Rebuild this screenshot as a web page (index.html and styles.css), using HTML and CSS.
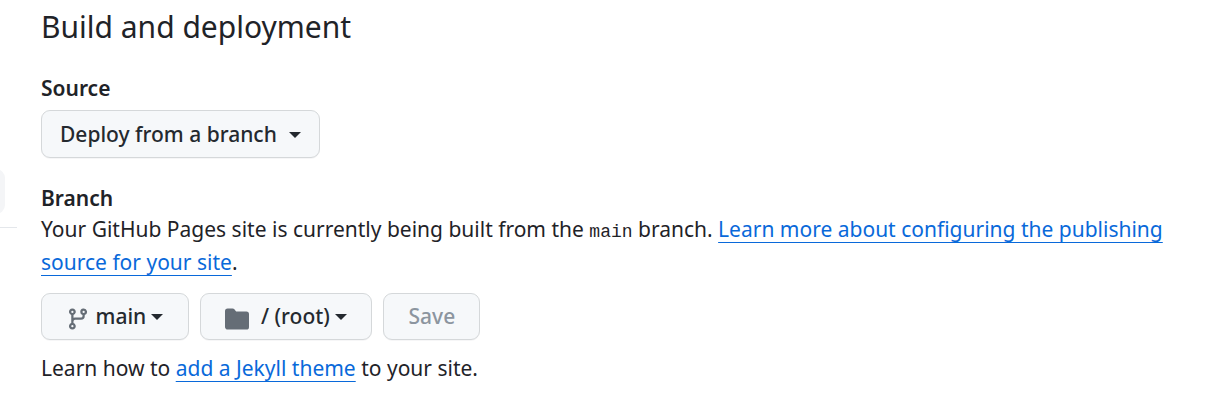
FILE: index.html
```html
<!DOCTYPE html>
<html lang="en">
<head>
<meta charset="utf-8">
<title>Pages settings</title>
<link rel="stylesheet" href="styles.css">
</head>
<body>
<div class="page">
  <aside class="sidebar"><div class="nav-item"></div><div class="divider"></div></aside>
  <main class="content">
    <h2 class="title">Build and deployment</h2>
    <h4 class="label">Source</h4>
    <button class="btn source-btn">Deploy from a branch<span class="caret"></span></button>
    <h4 class="label branch-label">Branch</h4>
    <p class="text">Your GitHub Pages site is currently being built from the <code class="code">main</code> branch. <a class="link" href="#">Learn more about configuring the publishing source for your site</a>.</p>
    <div class="controls">
      <button class="btn main-btn"><svg class="icon" viewBox="0 0 16 16"><path d="M9.5 3.25a2.25 2.25 0 1 1 3 2.122V6A2.5 2.5 0 0 1 10 8.5H6a1 1 0 0 0-1 1v1.128a2.251 2.251 0 1 1-1.5 0V5.372a2.25 2.25 0 1 1 1.5 0v1.836A2.493 2.493 0 0 1 6 7h4a1 1 0 0 0 1-1v-.628A2.25 2.25 0 0 1 9.5 3.25Zm-6 0a.75.75 0 1 0 1.5 0 .75.75 0 0 0-1.5 0Zm8.25-.75a.75.75 0 1 0 0 1.5.75.75 0 0 0 0-1.5ZM4.25 12a.75.75 0 1 0 0 1.5.75.75 0 0 0 0-1.5Z"/></svg>main<span class="caret"></span></button>
      <button class="btn root-btn"><svg class="icon folder" viewBox="0 0 16 16"><path d="M1.75 1A1.75 1.75 0 0 0 0 2.75v10.5C0 14.216.784 15 1.75 15h12.5A1.75 1.75 0 0 0 16 13.25v-8.5A1.75 1.75 0 0 0 14.25 3H7.5a.25.25 0 0 1-.2-.1l-.9-1.2C6.07 1.26 5.55 1 5 1H1.75Z"/></svg>/ (root)<span class="caret"></span></button>
      <button class="btn save-btn" disabled>Save</button>
    </div>
    <p class="text note">Learn how to <a class="link" href="#">add a Jekyll theme</a> to your site.</p>
  </main>
</div>
</body>
</html>
```
FILE: styles.css
```css
* { box-sizing: border-box; }
body { margin: 0; background: #fff; color: #1f2328; font-family: "Noto Sans", sans-serif; font-size: 21px; line-height: 33px; }
.page { display: flex; height: 408px; overflow: hidden; }
.sidebar { width: 41px; flex: none; padding-top: 169px; }
.nav-item { width: 45px; height: 45px; margin-left: -40px; background: #f4f5f7; border-radius: 9px; }
.divider { width: 17px; height: 1px; margin-top: 13px; background: #e4e7eb; }
.content { flex: 1; padding-top: 4px; padding-right: 25px; }
.title { margin: 0; font-size: 30px; font-weight: 400; line-height: 45px; }
.label { margin: 23px 0 5px; font-size: 21px; font-weight: 600; line-height: 33px; }
.branch-label { margin: 26px 0 0; line-height: 29px; }
.text { margin: 0; font-size: 21px; }
.code { font-family: "Liberation Mono", monospace; font-size: 18px; line-height: 1; }
.link { color: #0969da; text-decoration: underline; text-decoration-thickness: 1px; text-underline-offset: 5px; }
.controls { display: flex; gap: 11px; margin-top: 14px; }
.btn { display: flex; align-items: center; height: 48px; margin: 0; padding: 0 18px; border: 1px solid #d5d8da; border-radius: 9px; background: #f6f8fa; box-shadow: 0 1px 0 rgba(31,35,40,.04); color: #24292f; font: 500 21px/30px "Noto Sans", sans-serif; white-space: nowrap; }
.controls .btn { height: 47px; padding-bottom: 1px; }
.source-btn { width: 279px; }
.controls .main-btn { width: 148px; padding-left: 24px; }
.controls .root-btn { width: 172px; padding-left: 24px; }
.controls .save-btn { width: 97px; padding-left: 24.5px; color: #8c959f; }
.caret { border: 6px solid transparent; border-top-color: currentColor; border-bottom: 0; margin: 2px 0 0 12px; }
.controls .caret { margin-left: 5px; }
.icon { width: 24px; height: 24px; fill: #656d76; margin: 5px 5.5px 0 0; flex: none; }
.controls .folder { margin-right: 12px; }
.note { margin-top: 12px; }
```
